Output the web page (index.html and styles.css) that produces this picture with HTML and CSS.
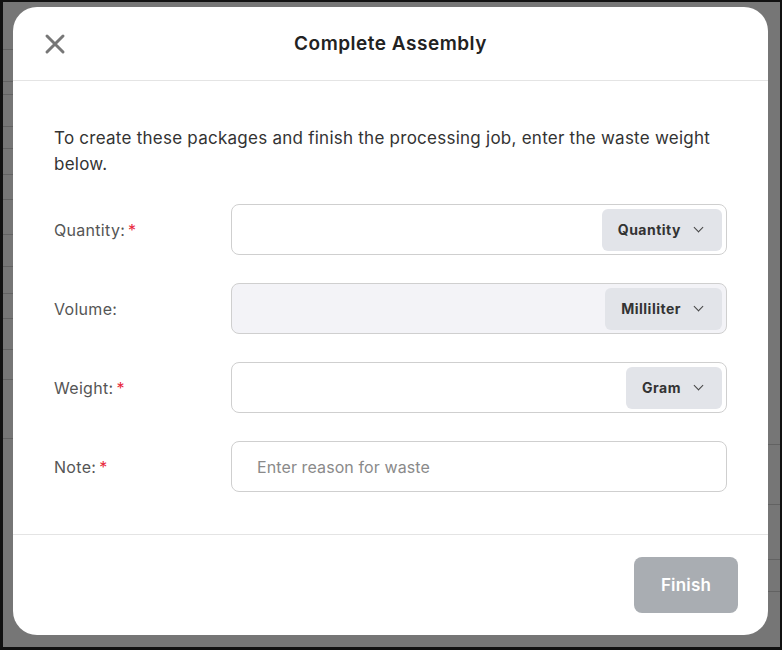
FILE: index.html
```html
<!DOCTYPE html>
<html lang="en">
<head>
    <meta charset="UTF-8">
    <meta name="viewport" content="width=device-width, initial-scale=1.0">
    <title>Complete Assembly</title>
    <link rel="stylesheet" href="styles.css">
</head>
<body>
    <div class="screen">
        <div class="backdrop">
            <div class="backdrop-col left">
                <div class="row" style="height: 48px"></div>
                <div class="row" style="height: 32px"></div>
                <div class="row" style="height: 13px"></div>
                <div class="row" style="height: 32px"></div>
                <div class="row" style="height: 22px"></div>
                <div class="row" style="height: 26px"></div>
                <div class="row" style="height: 25px"></div>
                <div class="row" style="height: 35px"></div>
                <div class="row" style="height: 32px"></div>
                <div class="row" style="height: 27px"></div>
                <div class="row" style="height: 25px"></div>
                <div class="row" style="height: 31px"></div>
                <div class="row" style="height: 30px"></div>
                <div class="row" style="height: 59px"></div>
            </div>
            <div class="backdrop-col right">
                <div class="row" style="height: 443px"></div>
                <div class="row" style="height: 60px"></div>
                <div class="row" style="height: 55px"></div>
                <div class="row" style="height: 32px"></div>
            </div>
        </div>

        <div class="modal">
            <div class="modal-header">
                <button class="close-btn" aria-label="Close">
                    <svg width="22" height="22" viewBox="0 0 22 22">
                        <path d="M3 3 L19 19 M19 3 L3 19" stroke="#777" stroke-width="3" stroke-linecap="round" fill="none"/>
                    </svg>
                </button>
                <h2>Complete Assembly</h2>
            </div>

            <div class="modal-body">
                <p class="intro">To create these packages and finish the processing job, enter the waste weight below.</p>

                <div class="form-row">
                    <label for="quantity">Quantity:<span class="req">*</span></label>
                    <div class="field">
                        <input type="text" id="quantity">
                        <button class="unit">Quantity <span class="chev"></span></button>
                    </div>
                </div>

                <div class="form-row">
                    <label for="volume">Volume:</label>
                    <div class="field disabled">
                        <input type="text" id="volume" disabled>
                        <button class="unit">Milliliter <span class="chev"></span></button>
                    </div>
                </div>

                <div class="form-row">
                    <label for="weight">Weight:<span class="req">*</span></label>
                    <div class="field">
                        <input type="text" id="weight">
                        <button class="unit">Gram <span class="chev"></span></button>
                    </div>
                </div>

                <div class="form-row">
                    <label for="note">Note:<span class="req">*</span></label>
                    <div class="field">
                        <input type="text" id="note" class="note" placeholder="Enter reason for waste">
                    </div>
                </div>
            </div>

            <div class="modal-footer">
                <button class="finish-btn" disabled>Finish</button>
            </div>
        </div>
    </div>
</body>
</html>
```

FILE: styles.css
```css
body {
    margin: 0;
    padding: 0;
    font-family: Inter, "Noto Sans", sans-serif;
    background-color: #111;
}

.screen {
    position: relative;
    width: 782px;
    height: 650px;
    box-sizing: border-box;
    border-left: 3px solid #111;
    border-top: 2px solid #111;
    border-right: 2px solid #111;
    border-bottom: 3px solid #111;
    background-color: #767676;
    overflow: hidden;
}

.backdrop {
    display: flex;
    justify-content: space-between;
    height: 100%;
}

.backdrop-col {
    width: 40px;
    display: flex;
    flex-direction: column;
}

.backdrop-col .row {
    box-sizing: border-box;
    border-bottom: 1px solid #626262;
}

.modal {
    position: absolute;
    left: 10px;
    top: 5px;
    width: 755px;
    height: 628px;
    background-color: #fff;
    border-radius: 24px;
    display: flex;
    flex-direction: column;
    overflow: hidden;
}

.modal-header {
    position: relative;
    height: 73px;
    display: flex;
    align-items: center;
    justify-content: center;
    border-bottom: 1px solid #e4e4e4;
    flex-shrink: 0;
}

.modal-header h2 {
    margin: 0;
    font-size: 19px;
    font-weight: 600;
    color: #222;
    letter-spacing: 0.5px;
}

.close-btn {
    position: absolute;
    left: 31px;
    top: 26px;
    background: none;
    border: none;
    padding: 0;
    cursor: pointer;
    line-height: 0;
}

.modal-body {
    flex: 1;
    padding: 44px 41px 0 41px;
}

.intro {
    margin: 0 0 27px 0;
    font-size: 17px;
    line-height: 26px;
    letter-spacing: 0.25px;
    color: #333;
}

.form-row {
    display: flex;
    align-items: center;
    margin-bottom: 28px;
}

.form-row label {
    width: 177px;
    flex-shrink: 0;
    font-size: 16px;
    letter-spacing: 0.3px;
    color: #555;
}

.req {
    color: #e8283c;
    margin-left: 3px;
}

.field {
    flex: 1;
    height: 51px;
    box-sizing: border-box;
    border: 1px solid #cfcfcf;
    border-radius: 8px;
    display: flex;
    align-items: center;
    padding: 3px 4px 3px 0;
    background-color: #fff;
}

.field.disabled {
    background-color: #f3f3f7;
}

.field input {
    flex: 1;
    min-width: 0;
    height: 100%;
    border: none;
    outline: none;
    background: transparent;
    font-family: inherit;
    font-size: 16px;
    letter-spacing: 0.1px;
    padding: 0 0 0 25px;
}

.field input::placeholder {
    color: #8a8a8a;
}

.unit {
    height: 42px;
    border: none;
    border-radius: 6px;
    background-color: #e2e4e9;
    font-family: inherit;
    font-size: 14px;
    font-weight: 700;
    letter-spacing: 0.5px;
    color: #333;
    padding: 0 20px 0 16px;
    display: flex;
    align-items: center;
    gap: 14px;
    cursor: pointer;
}

.chev {
    width: 6px;
    height: 6px;
    border-right: 1.6px solid #444;
    border-bottom: 1.6px solid #444;
    transform: translateY(-2px) rotate(45deg);
}

.modal-footer {
    height: 100px;
    flex-shrink: 0;
    border-top: 1px solid #e4e4e4;
    display: flex;
    align-items: center;
    justify-content: flex-end;
    padding-right: 30px;
}

.finish-btn {
    width: 104px;
    height: 56px;
    border: none;
    border-radius: 8px;
    background-color: #a9adb2;
    color: #fff;
    font-family: inherit;
    font-size: 17px;
    font-weight: 600;
    letter-spacing: 0.2px;
}
```
